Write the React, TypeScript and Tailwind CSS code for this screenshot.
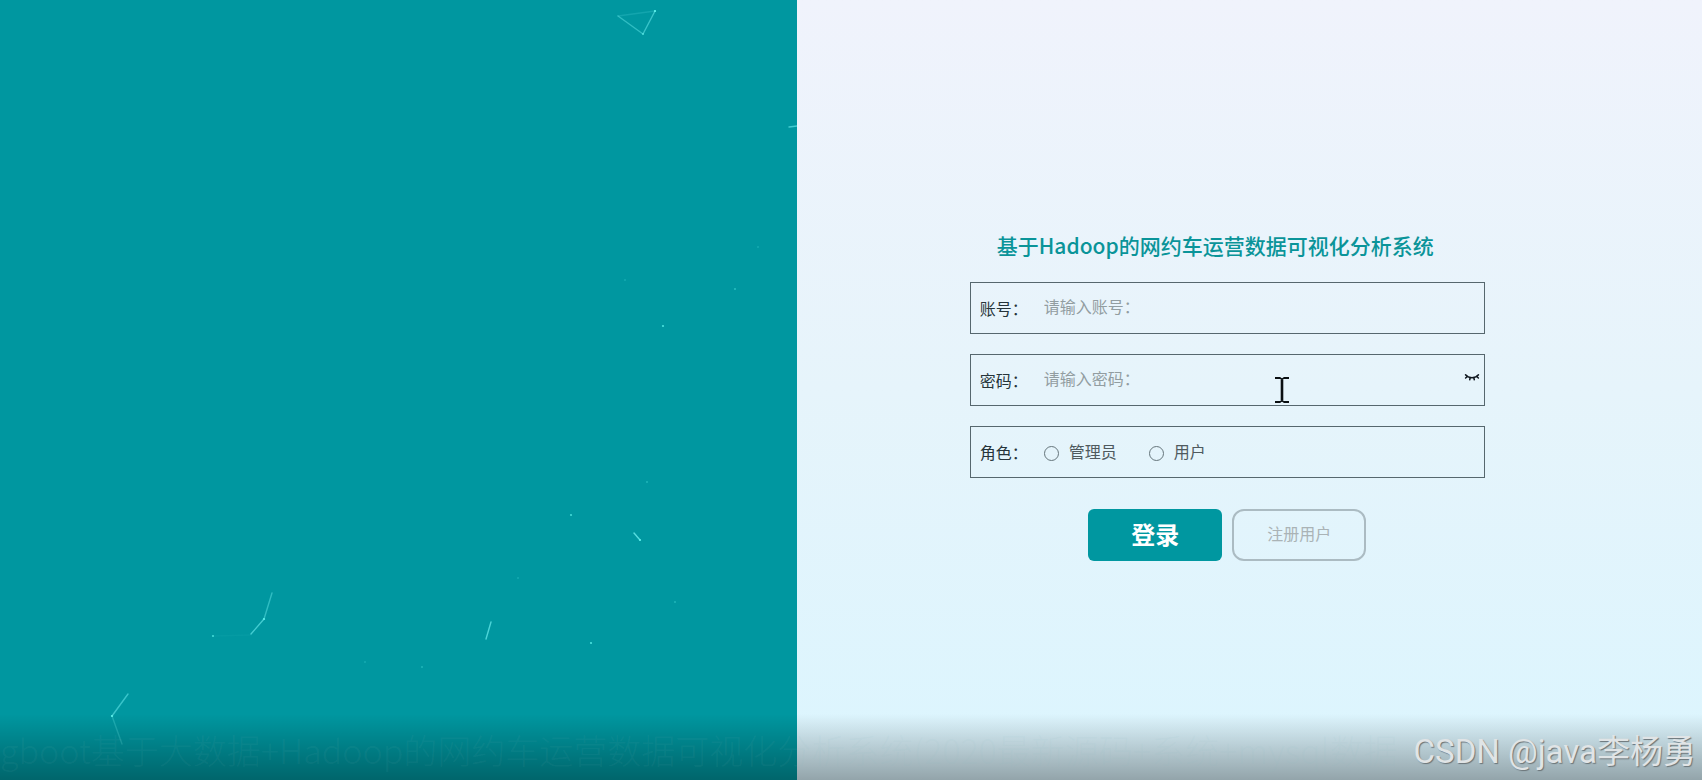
import { useState } from "react"
import type { ReactNode } from "react"

const ROLES = ["管理员", "用户"]

const LINKS = [
  { x1: 618, y1: 16, x2: 643, y2: 34, opacity: 0.5 },
  { x1: 643, y1: 34, x2: 655, y2: 11, opacity: 0.6 },
  { x1: 618, y1: 16, x2: 655, y2: 11, opacity: 0.2 },
  { x1: 789, y1: 127, x2: 797, y2: 126, opacity: 0.7 },
  { x1: 634, y1: 533, x2: 640, y2: 540, opacity: 0.9 },
  { x1: 272, y1: 593, x2: 264, y2: 619, opacity: 0.5 },
  { x1: 264, y1: 619, x2: 251, y2: 634, opacity: 0.7 },
  { x1: 213, y1: 636, x2: 251, y2: 635, opacity: 0.05 },
  { x1: 491, y1: 622, x2: 486, y2: 639, opacity: 0.8 },
  { x1: 128, y1: 694, x2: 112, y2: 716, opacity: 0.6 },
  { x1: 112, y1: 716, x2: 122, y2: 744, opacity: 0.3 },
]

const DOTS = [
  { x: 655, y: 11, opacity: 1 },
  { x: 643, y: 34, opacity: 0.5 },
  { x: 758, y: 247, opacity: 0.2 },
  { x: 625, y: 280, opacity: 0.2 },
  { x: 735, y: 289, opacity: 0.4 },
  { x: 663, y: 326, opacity: 0.8 },
  { x: 647, y: 482, opacity: 0.3 },
  { x: 571, y: 515, opacity: 0.7 },
  { x: 640, y: 540, opacity: 0.9 },
  { x: 518, y: 578, opacity: 0.2 },
  { x: 675, y: 602, opacity: 0.3 },
  { x: 591, y: 643, opacity: 0.8 },
  { x: 264, y: 619, opacity: 0.9 },
  { x: 213, y: 636, opacity: 0.7 },
  { x: 365, y: 662, opacity: 0.2 },
  { x: 422, y: 667, opacity: 0.3 },
  { x: 112, y: 716, opacity: 1 },
]

function Particles() {
  return (
    <svg
      className="h-full w-full"
      viewBox="0 0 797 780"
      preserveAspectRatio="xMinYMin slice"
      aria-hidden
    >
      {LINKS.map((l, i) => (
        <line
          key={i}
          x1={l.x1}
          y1={l.y1}
          x2={l.x2}
          y2={l.y2}
          stroke="#5fe3e6"
          strokeOpacity={l.opacity}
          strokeWidth="1.4"
          strokeLinecap="round"
        />
      ))}
      {DOTS.map((d, i) => (
        <circle key={i} cx={d.x} cy={d.y} r="1.1" fill="#5ff5ee" fillOpacity={d.opacity} />
      ))}
    </svg>
  )
}

function ClosedEye() {
  return (
    <svg
      width="16"
      height="10"
      viewBox="0 0 16 10"
      fill="none"
      stroke="#101820"
      strokeWidth="1.5"
      strokeLinecap="round"
      aria-hidden
    >
      <path d="M1.5 1.8C4.5 5.6 11.5 5.6 14.5 1.8" />
      <path d="M3.2 3.6 1.6 5M6.2 4.8 5.7 6.8M9.8 4.8l.5 2M12.8 3.6l1.6 1.4" />
    </svg>
  )
}

function TextCursor() {
  return (
    <svg width="16" height="28" viewBox="0 0 16 28" fill="none" stroke="#0a0f12" aria-hidden>
      <path d="M1 2h5.5M9.5 2H15M1 26h5.5M9.5 26H15" strokeWidth="2" />
      <path d="M6 2.3q1.5 0 2 1.2q.5-1.2 2-1.2M6 25.7q1.5 0 2-1.2q.5 1.2 2 1.2" strokeWidth="1.5" />
      <path d="M8 3.5v21" strokeWidth="2.6" />
    </svg>
  )
}

function FieldRow({ children }: { children: ReactNode }) {
  return (
    <div className="relative mb-5 flex h-[52px] items-center border border-[#56676e] pl-[9px]">
      {children}
    </div>
  )
}

export default function App() {
  const [account, setAccount] = useState("")
  const [password, setPassword] = useState("")
  const [showPassword, setShowPassword] = useState(false)
  const [role, setRole] = useState("")

  const labelClass = "w-16 shrink-0 text-base text-[#26343a]"
  const inputClass =
    "h-full min-w-0 flex-1 bg-transparent pb-1 text-base text-[#26343a] outline-none placeholder:text-[#929da1]"

  return (
    <div className="relative flex min-h-screen overflow-hidden font-['Noto_Sans_CJK_SC',sans-serif]">
      <aside className="relative w-[46.8%] shrink-0 bg-[#0097a0]">
        <div className="absolute inset-0">
          <Particles />
        </div>
      </aside>

      <main className="flex flex-1 flex-col bg-linear-to-b from-[#f0f3fc] via-[#e6f4fb] to-[#dbf5fe] pt-[227px] pr-[68px] pl-6">
        <form
          className="mx-auto flex w-full max-w-[515px] flex-col"
          onSubmit={(e) => e.preventDefault()}
        >
          <h1 className="mb-[19px] pr-6 text-center text-[21px] leading-9 font-medium text-[#0a9499]">
            基于Hadoop的网约车运营数据可视化分析系统
          </h1>

          <FieldRow>
            <label htmlFor="account" className={labelClass}>
              账号：
            </label>
            <input
              id="account"
              type="text"
              value={account}
              onChange={(e) => setAccount(e.target.value)}
              placeholder="请输入账号："
              className={inputClass}
            />
          </FieldRow>

          <FieldRow>
            <label htmlFor="password" className={labelClass}>
              密码：
            </label>
            <input
              id="password"
              type={showPassword ? "text" : "password"}
              value={password}
              onChange={(e) => setPassword(e.target.value)}
              placeholder="请输入密码："
              className={inputClass}
            />
            <button
              type="button"
              aria-label={showPassword ? "隐藏密码" : "显示密码"}
              onClick={() => setShowPassword((v) => !v)}
              className="mr-1 pb-1"
            >
              <ClosedEye />
            </button>
            <div className="pointer-events-none absolute top-[21px] left-[303px]">
              <TextCursor />
            </div>
          </FieldRow>

          <FieldRow>
            <span className={labelClass}>角色：</span>
            <div role="radiogroup" aria-label="角色" className="flex items-center gap-8 pb-0.5">
              {ROLES.map((name) => (
                <label key={name} className="flex items-center gap-2.5 text-base text-[#4f5a5f]">
                  <input
                    type="radio"
                    name="role"
                    value={name}
                    checked={role === name}
                    onChange={() => setRole(name)}
                    className="mt-1 size-[15px] appearance-none rounded-full border border-[#65757b] checked:border-4 checked:border-[#0097a0]"
                  />
                  {name}
                </label>
              ))}
            </div>
          </FieldRow>

          <div className="mt-[11px] flex justify-center gap-2.5">
            <button
              type="submit"
              className="h-[52px] w-[134px] rounded-md bg-[#0097a0] pb-0.5 text-2xl font-bold text-white"
            >
              登录
            </button>
            <button
              type="button"
              className="h-[52px] w-[134px] rounded-xl border-2 border-[#abbbc2] pb-1 text-base text-[#aab3b6]"
            >
              注册用户
            </button>
          </div>
        </form>
      </main>

      <div className="pointer-events-none absolute inset-x-0 bottom-0 h-[66px] overflow-hidden bg-linear-to-b from-transparent to-black/33">
        <p className="pt-2.5 text-[34px] leading-[52px] font-light whitespace-nowrap text-[#8fc0c4]/8">
          gboot基于大数据+Hadoop的网约车运营数据可视化分析系统(2020最新源码+系统+mysql数据
        </p>
      </div>
      <p className="pointer-events-none absolute right-1.5 bottom-1 font-[Roboto,'Noto_Sans_CJK_SC',sans-serif] text-[33px] leading-[48px] text-[#e0e4e6] [text-shadow:1px_1px_1px_#6b7478]">
        CSDN @java李杨勇
      </p>
    </div>
  )
}
